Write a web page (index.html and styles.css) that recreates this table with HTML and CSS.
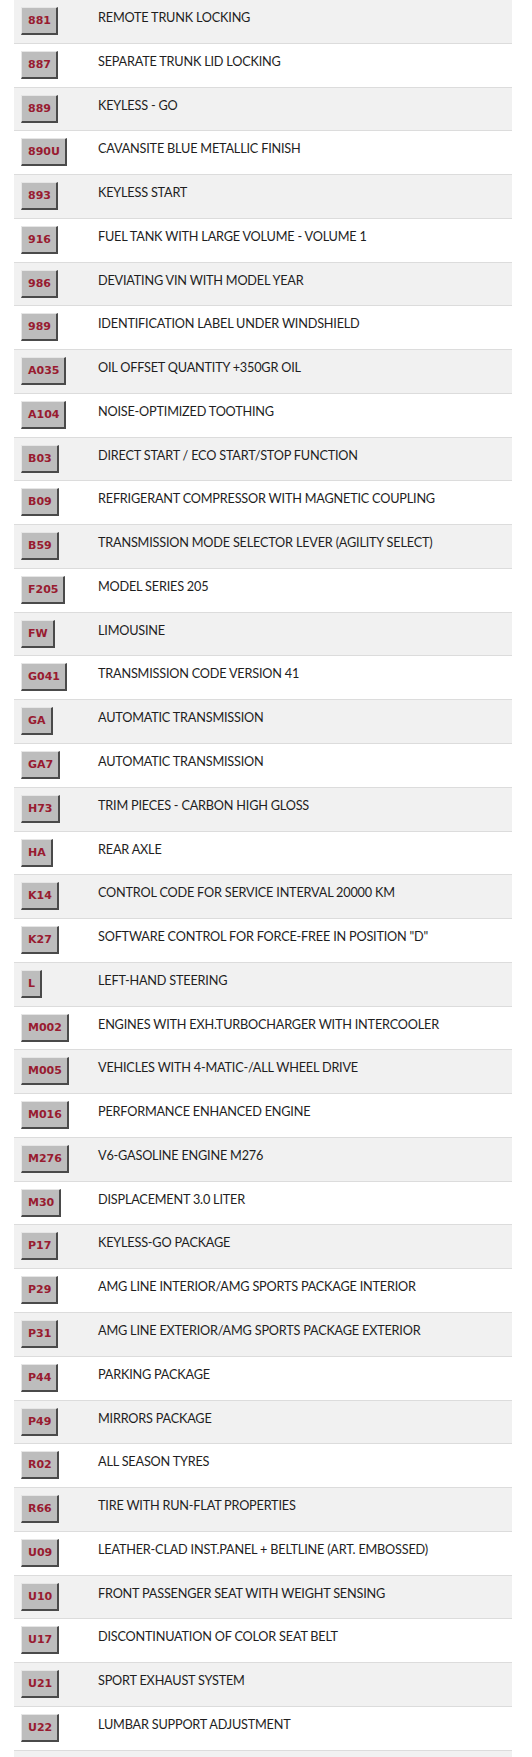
FILE: index.html
```html
<!DOCTYPE html>
<html>
<head>
<meta charset="utf-8">
<link rel="stylesheet" href="styles.css">
</head>
<body>
<div class="list">
  <div class="row"><div class="code"><span class="btn">881</span></div><div class="desc">REMOTE TRUNK LOCKING</div></div>
  <div class="row"><div class="code"><span class="btn">887</span></div><div class="desc">SEPARATE TRUNK LID LOCKING</div></div>
  <div class="row"><div class="code"><span class="btn">889</span></div><div class="desc">KEYLESS - GO</div></div>
  <div class="row"><div class="code"><span class="btn">890U</span></div><div class="desc">CAVANSITE BLUE METALLIC FINISH</div></div>
  <div class="row"><div class="code"><span class="btn">893</span></div><div class="desc">KEYLESS START</div></div>
  <div class="row"><div class="code"><span class="btn">916</span></div><div class="desc">FUEL TANK WITH LARGE VOLUME - VOLUME 1</div></div>
  <div class="row"><div class="code"><span class="btn">986</span></div><div class="desc">DEVIATING VIN WITH MODEL YEAR</div></div>
  <div class="row"><div class="code"><span class="btn">989</span></div><div class="desc">IDENTIFICATION LABEL UNDER WINDSHIELD</div></div>
  <div class="row"><div class="code"><span class="btn">A035</span></div><div class="desc">OIL OFFSET QUANTITY +350GR OIL</div></div>
  <div class="row"><div class="code"><span class="btn">A104</span></div><div class="desc">NOISE-OPTIMIZED TOOTHING</div></div>
  <div class="row"><div class="code"><span class="btn">B03</span></div><div class="desc">DIRECT START / ECO START/STOP FUNCTION</div></div>
  <div class="row"><div class="code"><span class="btn">B09</span></div><div class="desc">REFRIGERANT COMPRESSOR WITH MAGNETIC COUPLING</div></div>
  <div class="row"><div class="code"><span class="btn">B59</span></div><div class="desc">TRANSMISSION MODE SELECTOR LEVER (AGILITY SELECT)</div></div>
  <div class="row"><div class="code"><span class="btn">F205</span></div><div class="desc">MODEL SERIES 205</div></div>
  <div class="row"><div class="code"><span class="btn">FW</span></div><div class="desc">LIMOUSINE</div></div>
  <div class="row"><div class="code"><span class="btn">G041</span></div><div class="desc">TRANSMISSION CODE VERSION 41</div></div>
  <div class="row"><div class="code"><span class="btn">GA</span></div><div class="desc">AUTOMATIC TRANSMISSION</div></div>
  <div class="row"><div class="code"><span class="btn">GA7</span></div><div class="desc">AUTOMATIC TRANSMISSION</div></div>
  <div class="row"><div class="code"><span class="btn">H73</span></div><div class="desc">TRIM PIECES - CARBON HIGH GLOSS</div></div>
  <div class="row"><div class="code"><span class="btn">HA</span></div><div class="desc">REAR AXLE</div></div>
  <div class="row"><div class="code"><span class="btn">K14</span></div><div class="desc">CONTROL CODE FOR SERVICE INTERVAL 20000 KM</div></div>
  <div class="row"><div class="code"><span class="btn">K27</span></div><div class="desc">SOFTWARE CONTROL FOR FORCE-FREE IN POSITION "D"</div></div>
  <div class="row"><div class="code"><span class="btn">L</span></div><div class="desc">LEFT-HAND STEERING</div></div>
  <div class="row"><div class="code"><span class="btn">M002</span></div><div class="desc">ENGINES WITH EXH.TURBOCHARGER WITH INTERCOOLER</div></div>
  <div class="row"><div class="code"><span class="btn">M005</span></div><div class="desc">VEHICLES WITH 4-MATIC-/ALL WHEEL DRIVE</div></div>
  <div class="row"><div class="code"><span class="btn">M016</span></div><div class="desc">PERFORMANCE ENHANCED ENGINE</div></div>
  <div class="row"><div class="code"><span class="btn">M276</span></div><div class="desc">V6-GASOLINE ENGINE M276</div></div>
  <div class="row"><div class="code"><span class="btn">M30</span></div><div class="desc">DISPLACEMENT 3.0 LITER</div></div>
  <div class="row"><div class="code"><span class="btn">P17</span></div><div class="desc">KEYLESS-GO PACKAGE</div></div>
  <div class="row"><div class="code"><span class="btn">P29</span></div><div class="desc">AMG LINE INTERIOR/AMG SPORTS PACKAGE INTERIOR</div></div>
  <div class="row"><div class="code"><span class="btn">P31</span></div><div class="desc">AMG LINE EXTERIOR/AMG SPORTS PACKAGE EXTERIOR</div></div>
  <div class="row"><div class="code"><span class="btn">P44</span></div><div class="desc">PARKING PACKAGE</div></div>
  <div class="row"><div class="code"><span class="btn">P49</span></div><div class="desc">MIRRORS PACKAGE</div></div>
  <div class="row"><div class="code"><span class="btn">R02</span></div><div class="desc">ALL SEASON TYRES</div></div>
  <div class="row"><div class="code"><span class="btn">R66</span></div><div class="desc">TIRE WITH RUN-FLAT PROPERTIES</div></div>
  <div class="row"><div class="code"><span class="btn">U09</span></div><div class="desc">LEATHER-CLAD INST.PANEL + BELTLINE (ART. EMBOSSED)</div></div>
  <div class="row"><div class="code"><span class="btn">U10</span></div><div class="desc">FRONT PASSENGER SEAT WITH WEIGHT SENSING</div></div>
  <div class="row"><div class="code"><span class="btn">U17</span></div><div class="desc">DISCONTINUATION OF COLOR SEAT BELT</div></div>
  <div class="row"><div class="code"><span class="btn">U21</span></div><div class="desc">SPORT EXHAUST SYSTEM</div></div>
  <div class="row"><div class="code"><span class="btn">U22</span></div><div class="desc">LUMBAR SUPPORT ADJUSTMENT</div></div>
  <div class="row"></div>
</div>
</body>
</html>
```
FILE: styles.css
```css
html, body {
  margin: 0;
  padding: 0;
  background: #ffffff;
}
.list {
  margin: 0 20px 0 14px;
  display: flex;
  flex-direction: column;
}
.row {
  display: flex;
  height: 43.78px;
  box-sizing: border-box;
  border-bottom: 1px solid #dcdcdc;
  background: #ffffff;
}
.row:nth-child(odd) {
  background: #f1f1f1;
}
.code {
  width: 84px;
  flex: none;
  padding: 7px 0 0 7px;
  box-sizing: border-box;
}
.btn {
  display: inline-block;
  height: 28px;
  box-sizing: border-box;
  padding: 0 5px 0 6px;
  line-height: 25px;
  background: #bdbdbd;
  border-style: solid;
  border-width: 1px 2px 2px 1px;
  border-color: #e6e6e6 #4a4a4a #4a4a4a #e6e6e6;
  font-family: "DejaVu Sans", Verdana, sans-serif;
  font-weight: bold;
  font-size: 11px;
  color: #981b30;
}
.desc {
  flex: 1;
  padding-top: 8px;
  font-family: Lato, "Open Sans", sans-serif;
  font-size: 12.7px;
  letter-spacing: -0.2px;
  line-height: 18px;
  color: #1e1e1e;
}
```
